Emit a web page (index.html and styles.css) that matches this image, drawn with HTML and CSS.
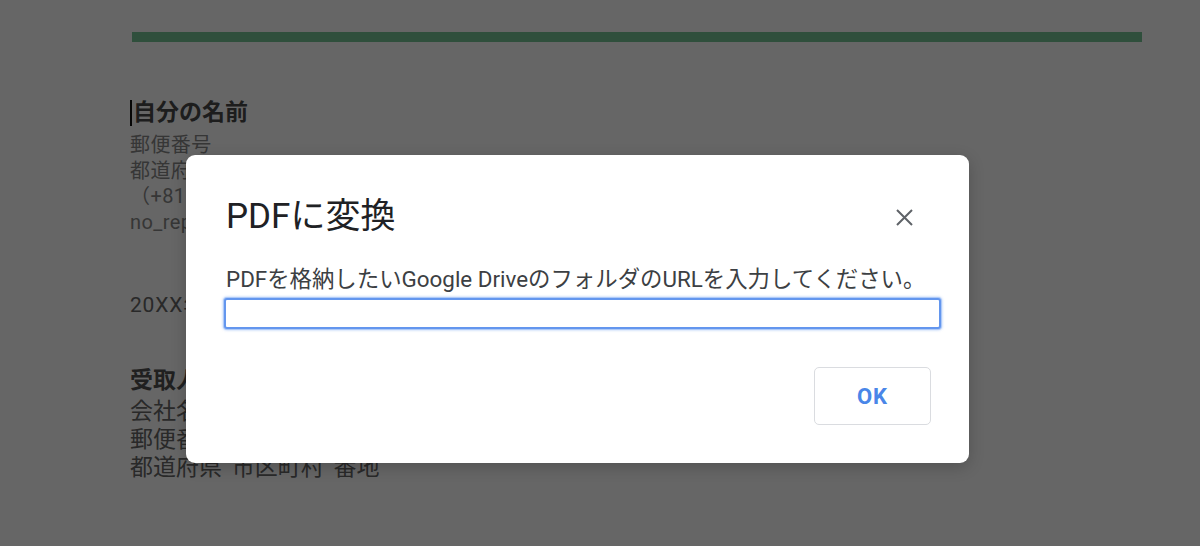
FILE: index.html
```html
<!DOCTYPE html>
<html lang="ja">
<head>
<meta charset="utf-8">
<title>PDFに変換</title>
<link rel="stylesheet" href="styles.css">
</head>
<body>
<div class="doc">
  <div class="rule"></div>
  <h1 class="name"><span class="cursor"></span>自分の名前</h1>
  <div class="contact">
    <p>郵便番号</p>
    <p>都道府県 市区町村 番地</p>
    <p>（+81）00-0000-0000</p>
    <p>no_reply@example.com</p>
  </div>
  <p class="date">20XX年XX月XX日</p>
  <h2 class="to">受取人の名前</h2>
  <div class="addr">
    <p>会社名</p>
    <p>郵便番号</p>
    <p>都道府県 市区町村 番地</p>
  </div>
</div>

<div class="backdrop"></div>

<div class="dialog" role="dialog">
  <div class="dialog-head">
    <h3 class="dialog-title">PDFに変換</h3>
    <button class="close" aria-label="閉じる">
      <svg width="17" height="17" viewBox="0 0 17 17"><path d="M1 1L16 16M16 1L1 16" stroke="#5f6368" stroke-width="2" fill="none"/></svg>
    </button>
  </div>
  <p class="dialog-text">PDFを格納したいGoogle DriveのフォルダのURLを入力してください。</p>
  <input class="url" type="text">
  <div class="dialog-foot">
    <button class="ok">OK</button>
  </div>
</div>
</body>
</html>
```

FILE: styles.css
```css
* { box-sizing: border-box; }
html, body { margin: 0; padding: 0; }
body {
  width: 1200px;
  height: 546px;
  overflow: hidden;
  background: #fff;
  font-family: Roboto, "Noto Sans CJK JP", sans-serif;
  position: relative;
}
p, h1, h2, h3 { margin: 0; font-weight: normal; }

.doc {
  padding: 32px 58px 0 130px;
  word-spacing: 4px;
}
.rule {
  height: 10px;
  margin-left: 2px;
  background: #75c596;
}
.name {
  margin-top: 58px;
  font-size: 23px;
  line-height: 26px;
  font-weight: bold;
  color: #4a4a4a;
  display: flex;
  align-items: center;
}
.cursor {
  width: 2px;
  height: 26px;
  background: #111;
  margin-right: 1px;
}
.contact {
  margin-top: 7px;
  font-size: 20px;
  line-height: 25.5px;
  color: #888;
  letter-spacing: 0.4px;
}
.date {
  margin-top: 56px;
  font-size: 21px;
  line-height: 28px;
  color: #666;
  letter-spacing: 0.8px;
}
.to {
  margin-top: 48px;
  font-size: 23px;
  line-height: 28px;
  font-weight: bold;
  color: #505050;
}
.addr {
  margin-top: 3px;
  font-size: 23px;
  line-height: 28px;
  color: #666;
}

.backdrop {
  position: absolute;
  inset: 0;
  background: rgba(0, 0, 0, 0.6);
}

.dialog {
  position: absolute;
  left: 186px;
  top: 155px;
  width: 783px;
  height: 308px;
  background: #fff;
  border-radius: 9px;
  padding: 42px 30px 38px 40px;
  box-shadow: 0 4px 16px rgba(0, 0, 0, 0.2);
}
.dialog-head {
  display: flex;
  align-items: center;
  justify-content: space-between;
  height: 40px;
}
.dialog-title {
  font-size: 35px;
  line-height: 40px;
  color: #202124;
}
.close {
  width: 34px;
  height: 34px;
  margin-right: 18px;
  border: 0;
  background: none;
  padding: 0;
  display: flex;
  align-items: center;
  justify-content: center;
}
.dialog-text {
  margin-top: 28px;
  font-size: 22.4px;
  line-height: 28px;
  color: #3c4043;
}
.url {
  display: block;
  width: 717px;
  margin-left: -2px;
  margin-top: 5px;
  height: 31px;
  border: 2px solid #6396ee;
  border-radius: 3px;
  box-shadow: 0 0 0 1px #aecaf8, 0 0 2px 2px rgba(99, 150, 238, 0.25);
  outline: none;
  background: #fff;
}
.dialog-foot {
  display: flex;
  justify-content: flex-end;
  margin-top: 38px;
}
.ok {
  width: 117px;
  height: 58px;
  margin-right: 8px;
  background: #fff;
  border: 1px solid #dadce0;
  border-radius: 5px;
  font-family: Roboto, sans-serif;
  font-size: 22px;
  font-weight: bold;
  letter-spacing: 1px;
  color: #4a86e8;
}
```
